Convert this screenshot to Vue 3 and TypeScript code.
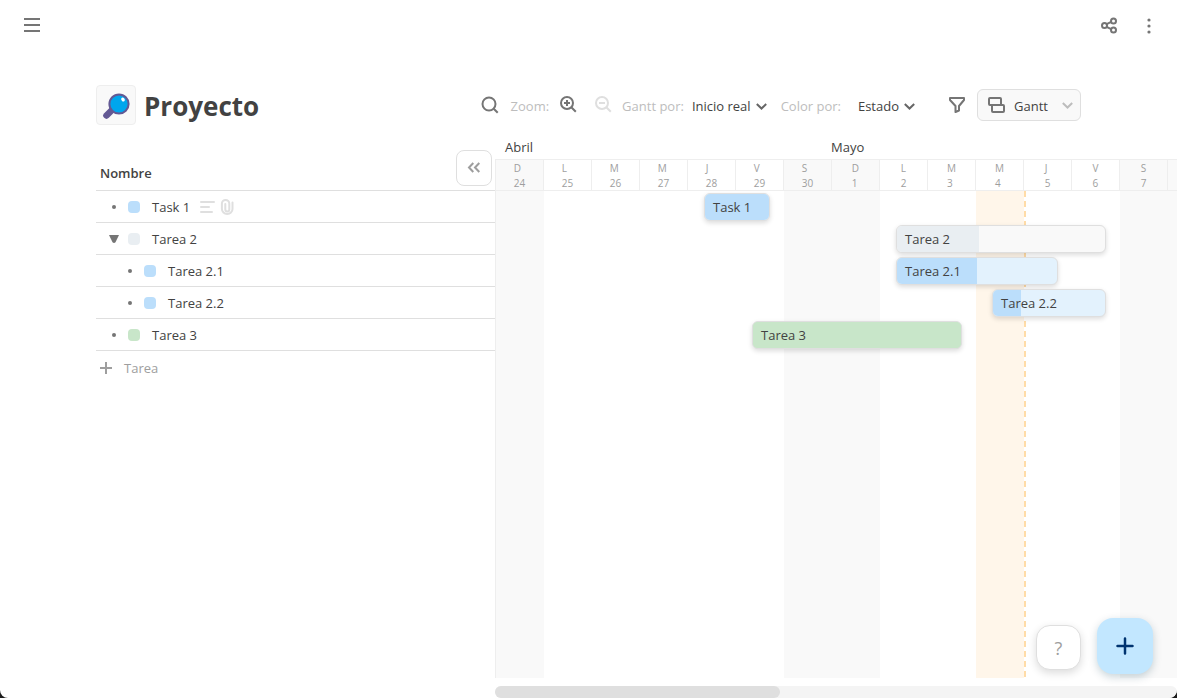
<script setup lang="ts">
import { computed, ref } from 'vue'

interface Task {
  id: number
  name: string
  level: number
  tone: 'blue' | 'gray' | 'green'
  start: number
  length: number
  progress: number
  parent?: boolean
  details?: boolean
}

const DAY = 48

const tasks = ref<Task[]>([
  { id: 1, name: 'Task 1', level: 0, tone: 'blue', start: 209, length: 66, progress: 66, details: true },
  { id: 2, name: 'Tarea 2', level: 0, tone: 'gray', start: 401, length: 210, progress: 82, parent: true },
  { id: 3, name: 'Tarea 2.1', level: 1, tone: 'blue', start: 401, length: 162, progress: 80 },
  { id: 4, name: 'Tarea 2.2', level: 1, tone: 'blue', start: 497, length: 114, progress: 28 },
  { id: 5, name: 'Tarea 3', level: 0, tone: 'green', start: 257, length: 210, progress: 210 },
])

const months = [
  { name: 'Abril', days: 7 },
  { name: 'Mayo', days: 7 },
]

const letters = ['D', 'L', 'M', 'M', 'J', 'V', 'S']
const days = computed(() =>
  Array.from({ length: 14 }, (_, i) => ({
    letter: letters[i % 7],
    number: i < 7 ? 24 + i : i - 6,
    weekend: i % 7 === 0 || i % 7 === 6,
    today: i === 10,
  })),
)

const open = ref(true)
const visible = computed(() => tasks.value.filter((t) => open.value || t.level === 0))
</script>

<template>
  <div class="app">
    <header class="topbar">
      <button class="icon" aria-label="Menú">
        <svg width="16" height="16" viewBox="0 0 16 16" fill="none" stroke="#757575" stroke-width="2">
          <path d="M0 2h16M0 8h16M0 14h16" />
        </svg>
      </button>
      <div class="top-actions">
        <button class="icon" aria-label="Compartir">
          <svg width="18" height="18" viewBox="0 0 18 18" fill="none" stroke="#757575" stroke-width="2">
            <circle cx="4.5" cy="9.500" r="2.500" />
            <circle cx="13.500" cy="5" r="2.500" />
            <circle cx="13.500" cy="14" r="2.500" />
            <path d="M6.600 8.200l4.600-2.300M6.600 10.800l4.600 2.300" />
          </svg>
        </button>
        <button class="icon" aria-label="Más opciones">
          <svg width="18" height="18" viewBox="0 0 18 18" fill="#757575">
            <circle cx="9" cy="4" r="1.600" />
            <circle cx="9" cy="10" r="1.600" />
            <circle cx="9" cy="16" r="1.600" />
          </svg>
        </button>
      </div>
    </header>

    <div class="heading">
      <button class="emoji" aria-label="Icono del proyecto">
        <svg width="30" height="30" viewBox="0 0 30 30">
          <path d="M5.5 25.5l6-6" stroke="#635994" stroke-width="6.5" stroke-linecap="round" />
          <circle cx="18" cy="14" r="9.6" fill="#00a6ed" stroke="#635994" stroke-width="2" />
          <ellipse cx="22" cy="9.5" rx="1.6" ry="2.2" fill="#fff" transform="rotate(-35 22 9.5)" />
        </svg>
      </button>
      <h1>Proyecto</h1>
      <div class="tools">
        <button class="icon search" aria-label="Buscar">
          <svg width="18" height="18" viewBox="0 0 18 18" fill="none" stroke="#757575" stroke-width="2">
            <circle cx="8" cy="8" r="6.5" />
            <path d="M12.7 12.7l4 4" />
          </svg>
        </button>
        <span class="label">Zoom:</span>
        <button class="icon zoom-in" aria-label="Acercar">
          <svg width="18" height="18" viewBox="0 0 18 18" fill="none" stroke="#757575" stroke-width="2">
            <circle cx="8" cy="7" r="6" />
            <path d="M12.300 11.300l4.500 4.500M5 7h6M8 4v6" />
          </svg>
        </button>
        <button class="icon zoom-out" aria-label="Alejar" disabled>
          <svg width="18" height="18" viewBox="0 0 18 18" fill="none" stroke="#dfdfdf" stroke-width="2">
            <circle cx="8" cy="7" r="6" />
            <path d="M12.300 11.300l4.500 4.500M5 7h6" />
          </svg>
        </button>
        <span class="label">Gantt por:</span>
        <button class="pick start">
          Inicio real
          <svg width="11" height="7" viewBox="0 0 11 7" fill="none" stroke="#666" stroke-width="2">
            <path d="M.8 1L5.500 5.500 10.200 1" />
          </svg>
        </button>
        <span class="label">Color por:</span>
        <button class="pick state">
          Estado
          <svg width="11" height="7" viewBox="0 0 11 7" fill="none" stroke="#666" stroke-width="2">
            <path d="M.8 1L5.500 5.500 10.200 1" />
          </svg>
        </button>
        <button class="icon" aria-label="Filtrar">
          <svg width="18" height="18" viewBox="0 0 18 18" fill="none" stroke="#757575" stroke-width="2" stroke-linejoin="round">
            <path d="M2 2h14v2l-5 6v4.5L7.5 16v-6L2 4z" />
          </svg>
        </button>
        <button class="view">
          <svg width="18" height="18" viewBox="0 0 18 18" fill="none" stroke="#757575" stroke-width="2" stroke-linejoin="round">
            <rect x="2" y="2" width="12" height="7" rx="1" />
            <path d="M5 9v6q0 1 1 1h10q1 0 1-1v-5q0-1-1-1H5" />
          </svg>
          <span>Gantt</span>
          <svg width="11" height="7" viewBox="0 0 11 7" fill="none" stroke="#bdbdbd" stroke-width="2">
            <path d="M.8 1L5.500 5.500 10.200 1" />
          </svg>
        </button>
      </div>
    </div>

    <main class="board">
      <section class="list">
        <div class="list-head">
          <strong>Nombre</strong>
          <button class="collapse" aria-label="Contraer panel">
            <svg width="14" height="12" viewBox="0 0 14 12" fill="none" stroke="#9e9e9e" stroke-width="2">
              <path d="M6.300 1L2 5.500l4.300 4.500M12.300 1L8 5.500l4.300 4.500" />
            </svg>
          </button>
        </div>
        <div v-for="t in visible" :key="t.id" class="task" :class="{ child: t.level === 1 }">
          <button v-if="t.parent" class="toggle" aria-label="Mostrar subtareas" @click="open = !open">
            <svg width="10" height="8" viewBox="0 0 10 8"><path d="M0 0h10L6.5 7.2q-1.5 1.5-3 0z" fill="#757575" /></svg>
          </button>
          <span v-else class="toggle"><i class="dot"></i></span>
          <i class="chip" :class="t.tone"></i>
          <span>{{ t.name }}</span>
          <span v-if="t.details" class="extras">
            <svg width="16" height="14" viewBox="0 0 16 14" stroke="#dfdfdf" stroke-width="2" stroke-linecap="round">
              <path d="M2 2h13M2 7h8M2 12h11" />
            </svg>
            <svg width="14" height="16" viewBox="0 0 14 16" fill="none" stroke="#dfdfdf" stroke-width="2" stroke-linecap="round">
              <path d="M12.500 3.500v6.500a5.300 5 0 0 1-10.600 0V4.500a3.700 3.500 0 0 1 7.400 0v6a2 2 0 0 1-4 0V5" />
            </svg>
          </span>
        </div>
        <button class="add-row">
          <svg width="12" height="12" viewBox="0 0 12 12" stroke="#9e9e9e" stroke-width="2"><path d="M6 0v12M0 6h12" /></svg>
          Tarea
        </button>
      </section>

      <section class="gantt">
        <div class="months">
          <span v-for="m in months" :key="m.name" class="month" :style="{ width: m.days * DAY + 'px' }">{{ m.name }}</span>
        </div>
        <div class="days">
          <div v-for="(d, i) in days" :key="i" class="day" :class="{ weekend: d.weekend }">
            <span>{{ d.letter }}<br />{{ d.number }}</span>
          </div>
          <div class="day rest weekend"></div>
        </div>
        <div class="canvas">
          <div class="columns">
            <div v-for="(d, i) in days" :key="i" class="column" :class="{ weekend: d.weekend, today: d.today }"></div>
            <div class="column rest weekend"></div>
          </div>
          <div class="bars">
            <div v-for="t in visible" :key="t.id" class="lane">
              <div class="bar" :class="t.tone" :style="{ marginLeft: t.start + 'px', width: t.length + 'px' }">
                <div class="done" :style="{ width: t.progress + 'px' }"></div>
                <span class="bar-name">{{ t.name }}</span>
              </div>
            </div>
          </div>
        </div>
        <div class="track"><div class="thumb"></div></div>
      </section>
    </main>

    <div class="floating">
      <button class="help" aria-label="Ayuda">?</button>
      <button class="create" aria-label="Crear tarea">
        <svg width="18" height="18" viewBox="0 0 18 18" stroke="#003470" stroke-width="2.500" stroke-linecap="round">
          <path d="M9 1.500v15M1.500 9h15" />
        </svg>
      </button>
    </div>
  </div>
</template>

<style>
html,
body {
  background: #1c1c1c;
}
</style>

<style scoped>
* {
  box-sizing: border-box;
}
.app {
  position: relative;
  display: flex;
  flex-direction: column;
  height: 100vh;
  overflow: hidden;
  background: #fff;
  border-radius: 0 0 8px 8px;
  color: #424242;
  font: 13px/20px 'Segoe UI', 'Open Sans', 'Noto Sans', sans-serif;
}
button {
  display: flex;
  align-items: center;
  padding: 0;
  border: 0;
  background: none;
  color: inherit;
  font: inherit;
  cursor: pointer;
}
svg {
  display: block;
  flex: none;
}
.topbar {
  display: flex;
  justify-content: space-between;
  align-items: center;
  flex: none;
  height: 50px;
  padding: 0 19px 0 24px;
}
.top-actions {
  display: flex;
  gap: 22px;
}
.heading {
  display: flex;
  align-items: center;
  flex: none;
  height: 40px;
  margin: 35px 96px 0;
}
.emoji {
  justify-content: center;
  width: 40px;
  height: 40px;
  background: #f9f9f9;
  border: 1px solid #eee;
  border-radius: 4px;
}
h1 {
  margin: 0 0 0 8px;
  padding-top: 2px;
  font-size: 26px;
  line-height: 40px;
  font-weight: 700;
}
.tools {
  display: flex;
  align-items: center;
  margin-left: auto;
}
.label,
.pick,
.view span {
  padding-top: 2px;
}
.label {
  color: #bdbdbd;
}
.search {
  margin-right: 12px;
}
.zoom-in {
  margin: 0 17px 0 10px;
}
.zoom-out {
  margin-right: 10px;
}
.pick {
  gap: 5px;
  white-space: nowrap;
}
.start {
  margin: 0 14px 0 8px;
}
.state {
  margin: 0 33px 0 17px;
}
.view {
  gap: 9px;
  width: 104px;
  height: 32px;
  margin-left: 11px;
  padding: 0 7px 0 9px;
  background: #f9f9f9;
  border: 1px solid #dfdfdf;
  border-radius: 6px;
}
.view svg:last-child {
  margin-left: auto;
}
.board {
  display: flex;
  flex: 1;
  min-height: 0;
  margin: 12px 0 0 96px;
}
.list {
  flex: none;
  width: 399px;
}
.list-head {
  display: flex;
  justify-content: space-between;
  align-items: flex-end;
  height: 54px;
  padding: 0 3px 4px 4px;
  border-bottom: 1px solid #dfdfdf;
}
.list-head strong {
  padding-bottom: 3px;
  font-weight: 600;
}
.collapse {
  justify-content: center;
  width: 36px;
  height: 36px;
  background: #fff;
  border: 1px solid #dfdfdf;
  border-radius: 8px;
}
.task {
  display: flex;
  align-items: center;
  height: 32px;
  padding-left: 12px;
  border-bottom: 1px solid #dfdfdf;
}
.child {
  padding-left: 28px;
}
.toggle {
  display: flex;
  justify-content: center;
  width: 12px;
  margin-right: 8px;
}
.dot {
  width: 4px;
  height: 4px;
  background: #757575;
  border-radius: 50%;
}
.chip {
  width: 12px;
  height: 12px;
  margin-right: 12px;
  border-radius: 4px;
}
.extras {
  display: flex;
  align-items: center;
  gap: 5px;
  margin-left: 9px;
}
.add-row {
  gap: 12px;
  height: 34px;
  padding-left: 4px;
  color: #9e9e9e;
}
.gantt {
  display: flex;
  flex: 1;
  flex-direction: column;
  min-width: 0;
  overflow: hidden;
}
.months {
  display: flex;
  flex: none;
  height: 22px;
}
.month {
  flex: none;
}
.month:first-child {
  padding-left: 10px;
}
.days {
  display: flex;
  flex: none;
  height: 32px;
  border-top: 1px solid #eee;
  border-bottom: 1px solid #eee;
}
.day {
  display: flex;
  justify-content: center;
  align-items: center;
  flex: none;
  width: 48px;
  padding-top: 2px;
  border-left: 1px solid #eee;
  color: #9e9e9e;
  font-size: 10px;
  line-height: 15px;
}
.weekend {
  background: #f9f9f9;
}
.canvas {
  display: grid;
  flex: 1;
  min-height: 0;
  border-left: 1px solid #eee;
}
.columns,
.bars {
  grid-area: 1 / 1;
  min-width: 0;
}
.columns {
  display: flex;
}
.column {
  flex: none;
  width: 48px;
}
.rest {
  flex: 1;
}
.today {
  background: #fff6ea;
}
.today + .column {
  background: repeating-linear-gradient(#ffdca8 0 6px, transparent 6px 10px) 0 0 / 2px 100% no-repeat;
}
.bars {
  z-index: 1;
  margin-left: -1px;
}
.lane {
  height: 32px;
  padding-top: 2px;
}
.bar {
  display: grid;
  align-items: center;
  height: 28px;
  overflow: hidden;
  border: 1px solid #dfdfdf;
  border-radius: 6px;
  box-shadow: 0 2px 5px rgba(0, 0, 0, 0.14);
}
.done,
.bar-name {
  grid-area: 1 / 1;
}
.done {
  height: 100%;
}
.bar-name {
  padding-left: 8px;
  white-space: nowrap;
}
.chip.blue,
.blue .done {
  background: #bbdefb;
}
.chip.gray,
.gray .done {
  background: #e9eef2;
}
.chip.green,
.green .done {
  background: #c8e6c9;
}
.bar.blue {
  background: #e3f2fd;
}
.bar.gray {
  background: #f9f9f9;
}
.bar.green {
  background: #c8e6c9;
}
.track {
  flex: none;
  height: 12px;
  margin-top: 8px;
  background: #f4f4f4;
  border-radius: 6px;
}
.thumb {
  width: 285px;
  height: 12px;
  background: #dfdfdf;
  border-radius: 6px;
}
.floating {
  position: absolute;
  right: 24px;
  bottom: 24px;
  z-index: 2;
  display: flex;
  align-items: center;
  gap: 16px;
}
.help {
  justify-content: center;
  width: 45px;
  height: 45px;
  margin-top: 2px;
  padding-top: 2px;
  background: #fff;
  border: 1px solid #dfdfdf;
  border-radius: 14px;
  box-shadow: 0 3px 8px rgba(0, 0, 0, 0.14);
  color: #9e9e9e;
  font-size: 18px;
}
.create {
  justify-content: center;
  width: 56px;
  height: 56px;
  background: #c2e7ff;
  border-radius: 16px;
  box-shadow: 0 3px 8px rgba(0, 60, 80, 0.22);
}
</style>
